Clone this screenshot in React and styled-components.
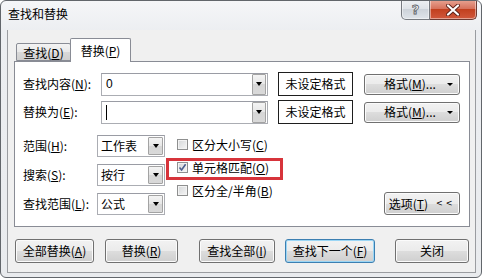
import styled, { createGlobalStyle } from 'styled-components';

const Global = createGlobalStyle`
  html, body { margin: 0; padding: 0; background: #fff; }
  body {
    font-family: "Noto Sans CJK SC", "Noto Sans", sans-serif;
    font-size: 12px;
    color: #000;
  }
  u { text-decoration: underline; text-underline-offset: 1px; }
`;

const Window = styled.div`
  width: 482px;
  height: 278px;
  box-sizing: border-box;
  border: 1px solid #62666b;
  border-radius: 6px;
  background: linear-gradient(#f5f6f8, #eceef1 30px, #e9ebee);
  display: flex;
  flex-direction: column;
  overflow: hidden;
`;

const TitleBar = styled.div`
  height: 29px;
  flex: none;
  display: flex;
  align-items: flex-start;
  padding-left: 7px;
`;

const Title = styled.div`
  line-height: 26px;
`;

const Caption = styled.div`
  margin-left: auto;
  margin-right: 4px;
  margin-top: -1px;
  display: flex;
`;

const CapButton = styled.div`
  width: ${p => p.$w}px;
  height: 20px;
  box-sizing: border-box;
  display: flex;
  align-items: center;
  justify-content: center;
  border: 1px solid ${p => (p.$close ? '#6d3b33' : '#767a80')};
  border-top: none;
  border-radius: ${p => (p.$close ? '0 0 5px 0' : '0 0 0 5px')};
  background: ${p =>
    p.$close
      ? 'linear-gradient(#e8a493, #d7725c 45%, #c2401f 50%, #d0583c 100%)'
      : 'linear-gradient(#eef0f3, #dfe3e8 45%, #cdd3da 50%, #dfe4ea 100%)'};
  box-shadow: inset 0 0 0 1px rgba(255, 255, 255, 0.45);
  & + & { border-left: none; }
`;

const HelpGlyph = styled.span`
  font-family: "DejaVu Sans", sans-serif;
  font-weight: bold;
  font-size: 13px;
  line-height: 14px;
  color: #f6f6f6;
  -webkit-text-stroke: 0.8px #5b5f66;
`;

const Client = styled.div`
  flex: 1;
  margin: 0 5px 4px 6px;
  border: 1px solid #9a9ca0;
  border-top: none;
  background: #f0f0f0;
  padding: 8px 5px 0 6px;
  display: flex;
  flex-direction: column;
`;

const Tabs = styled.div`
  height: 23px;
  display: flex;
  align-items: flex-end;
  padding-left: 2px;
`;

const Tab = styled.div`
  box-sizing: border-box;
  width: ${p => (p.$active ? 61 : 55)}px;
  height: ${p => (p.$active ? 24 : 18)}px;
  margin-bottom: ${p => (p.$active ? -1 : 0)}px;
  margin-left: ${p => (p.$active ? -1 : 0)}px;
  position: relative;
  z-index: ${p => (p.$active ? 1 : 0)};
  border: 1px solid #898c95;
  border-bottom: ${p => (p.$active ? 'none' : '1px solid #898c95')};
  border-radius: 2px 2px 0 0;
  background: ${p =>
    p.$active ? '#fff' : 'linear-gradient(#f3f3f3, #e9e9e9 50%, #d9d9d9 50%, #d0d0d0)'};
  display: flex;
  align-items: center;
  justify-content: center;
  line-height: 14px;
  padding-top: ${p => (p.$active ? 0 : 1)}px;
`;

const Panel = styled.div`
  box-sizing: border-box;
  height: 166px;
  border: 1px solid #898c95;
  background: #fff;
  padding: 10px 0 0 8px;
  display: flex;
  flex-direction: column;
`;

const FieldRow = styled.div`
  display: flex;
  align-items: center;
  height: 24px;
  & + & { margin-top: 4px; }
`;

const Label = styled.div`
  width: ${p => p.$w}px;
  flex: none;
  line-height: 14px;
`;

const Combo = styled.div`
  box-sizing: border-box;
  width: ${p => p.$w}px;
  height: ${p => p.$h}px;
  border: 1px solid #abadb3;
  border-top-color: #9a9ca4;
  background: #fff;
  display: flex;
  align-items: center;
  padding: 0 1px 0 ${p => p.$pl}px;
`;

const ComboText = styled.div`
  flex: 1;
  line-height: 14px;
  font-family: ${p => (p.$latin ? '"Liberation Sans", sans-serif' : 'inherit')};
`;

const Caret = styled.span`
  display: inline-block;
  width: 1px;
  height: 15px;
  background: #000;
  vertical-align: middle;
`;

const DropButton = styled.div`
  box-sizing: border-box;
  width: ${p => p.$w}px;
  height: ${p => p.$h}px;
  border: 1px solid #a3a3a3;
  border-radius: 1px;
  background: linear-gradient(#f4f4f4, #e6e6e6 50%, #d6d6d6 50%, #d9d9d9);
  display: flex;
  align-items: center;
  justify-content: center;
  &::after {
    content: '';
    border-left: 3px solid transparent;
    border-right: 3px solid transparent;
    border-top: 4px solid #000;
  }
`;

const FormatBox = styled.div`
  box-sizing: border-box;
  width: 75px;
  height: 24px;
  margin-left: 10px;
  border: 1px solid #1e1e1e;
  background: #fff;
  display: flex;
  align-items: center;
  justify-content: center;
  line-height: 14px;
`;

const Button = styled.div`
  box-sizing: border-box;
  width: ${p => p.$w}px;
  height: ${p => p.$h || 24}px;
  margin-left: ${p => p.$ml || 0}px;
  border: 1px solid ${p => (p.$default ? '#3c7fb1' : '#707070')};
  border-radius: 3px;
  background: linear-gradient(#f2f2f2, #ebebeb 50%, #dddddd 50%, #cfcfcf);
  box-shadow: inset 0 0 0 1px ${p => (p.$default ? '#9bd6f5' : '#fbfbfb')};
  display: flex;
  align-items: center;
  justify-content: ${p => p.$justify || 'center'};
  padding: ${p => p.$pad || '0'};
  line-height: 14px;
  flex: none;
`;

const SmallArrow = styled.span`
  border-left: 3px solid transparent;
  border-right: 3px solid transparent;
  border-top: 3px solid #000;
`;

const Chevrons = styled.span`
  font-family: "DejaVu Sans", sans-serif;
  font-size: 8px;
  letter-spacing: 3px;
  margin-left: 8px;
`;

const Lower = styled.div`
  display: flex;
  margin-top: 11px;
`;

const SelectCol = styled.div`
  display: flex;
  flex-direction: column;
  gap: 7px;
`;

const SelectRow = styled.div`
  display: flex;
  align-items: center;
  height: 22px;
`;

const CheckCol = styled.div`
  display: flex;
  flex-direction: column;
  margin: -2px 0 0 12px;
`;

const CheckRow = styled.div`
  position: relative;
  height: 23px;
  display: flex;
  align-items: center;
  line-height: 14px;
  ${p =>
    p.$highlight &&
    `&::after {
      content: '';
      position: absolute;
      left: -11px;
      top: 2px;
      width: 117px;
      height: 22px;
      box-sizing: border-box;
      border: 3px solid #d7343b;
    }`}
`;

const Box = styled.span`
  box-sizing: border-box;
  width: 11px;
  height: 11px;
  margin-right: 4px;
  border: 1px solid #8e8f8f;
  background: linear-gradient(135deg, #d4d6d8, #f6f6f6);
  box-shadow: inset 0 0 0 1px #f3f3f3;
  display: flex;
  align-items: center;
  justify-content: center;
`;

const OptionsWrap = styled.div`
  margin-left: auto;
  margin-right: 9px;
  align-self: flex-end;
`;

const Footer = styled.div`
  display: flex;
  margin-top: 12px;
  padding-left: 1px;
`;

function Checkbox({ checked, children, highlight }) {
  return (
    <CheckRow $highlight={highlight}>
      <Box>
        {checked && (
          <svg width="9" height="9" viewBox="0 0 9 9">
            <path d="M1.5 4.5 L3.6 7 L7.6 1.2" fill="none" stroke="#4b5f8f" strokeWidth="1.6" />
          </svg>
        )}
      </Box>
      {children}
    </CheckRow>
  );
}

function Select({ value }) {
  return (
    <Combo $w={68} $h={22} $pl={3}>
      <ComboText>{value}</ComboText>
      <DropButton $w={15} $h={18} />
    </Combo>
  );
}

export default function App() {
  return (
    <>
      <Global />
      <Window>
        <TitleBar>
          <Title>查找和替换</Title>
          <Caption>
            <CapButton $w={29}>
              <HelpGlyph>?</HelpGlyph>
            </CapButton>
            <CapButton $w={47} $close>
              <svg width="14" height="12" viewBox="0 0 14 12">
                <path d="M2 1.5 L12 10.5 M12 1.5 L2 10.5" stroke="#5e231a" strokeWidth="4" strokeLinecap="round" />
                <path d="M2 1.5 L12 10.5 M12 1.5 L2 10.5" stroke="#fff" strokeWidth="2.2" strokeLinecap="round" />
              </svg>
            </CapButton>
          </Caption>
        </TitleBar>
        <Client>
          <Tabs>
            <Tab>查找(<u>D</u>)</Tab>
            <Tab $active>替换(<u>P</u>)</Tab>
          </Tabs>
          <Panel>
            <FieldRow>
              <Label $w={78}>查找内容(<u>N</u>):</Label>
              <Combo $w={167} $h={23} $pl={4}>
                <ComboText $latin>0</ComboText>
                <DropButton $w={14} $h={21} />
              </Combo>
              <FormatBox>未设定格式</FormatBox>
              <Button $w={96} $h={21} $ml={11} $justify="space-between" $pad="0 6px 0 19px">
                <span>格式(<u>M</u>)...</span>
                <SmallArrow />
              </Button>
            </FieldRow>
            <FieldRow>
              <Label $w={78}>替换为(<u>E</u>):</Label>
              <Combo $w={167} $h={23} $pl={4}>
                <ComboText><Caret /></ComboText>
                <DropButton $w={14} $h={21} />
              </Combo>
              <FormatBox>未设定格式</FormatBox>
              <Button $w={96} $h={21} $ml={11} $justify="space-between" $pad="0 6px 0 19px">
                <span>格式(<u>M</u>)...</span>
                <SmallArrow />
              </Button>
            </FieldRow>
            <Lower>
              <SelectCol>
                <SelectRow>
                  <Label $w={74}>范围(<u>H</u>):</Label>
                  <Select value="工作表" />
                </SelectRow>
                <SelectRow>
                  <Label $w={74}>搜索(<u>S</u>):</Label>
                  <Select value="按行" />
                </SelectRow>
                <SelectRow>
                  <Label $w={74}>查找范围(<u>L</u>):</Label>
                  <Select value="公式" />
                </SelectRow>
              </SelectCol>
              <CheckCol>
                <Checkbox>区分大小写(<u>C</u>)</Checkbox>
                <Checkbox checked highlight>单元格匹配(<u>O</u>)</Checkbox>
                <Checkbox>区分全/半角(<u>B</u>)</Checkbox>
              </CheckCol>
              <OptionsWrap>
                <Button $w={76} $h={23}>
                  选项(<u>T</u>)<Chevrons>&lt;&lt;</Chevrons>
                </Button>
              </OptionsWrap>
            </Lower>
          </Panel>
          <Footer>
            <Button $w={79}>全部替换(<u>A</u>)</Button>
            <Button $w={73} $ml={11}>替换(<u>R</u>)</Button>
            <Button $w={76} $ml={21}>查找全部(<u>I</u>)</Button>
            <Button $w={90} $ml={10} $default>查找下一个(<u>F</u>)</Button>
            <Button $w={74} $ml={20}>关闭</Button>
          </Footer>
        </Client>
      </Window>
    </>
  );
}
